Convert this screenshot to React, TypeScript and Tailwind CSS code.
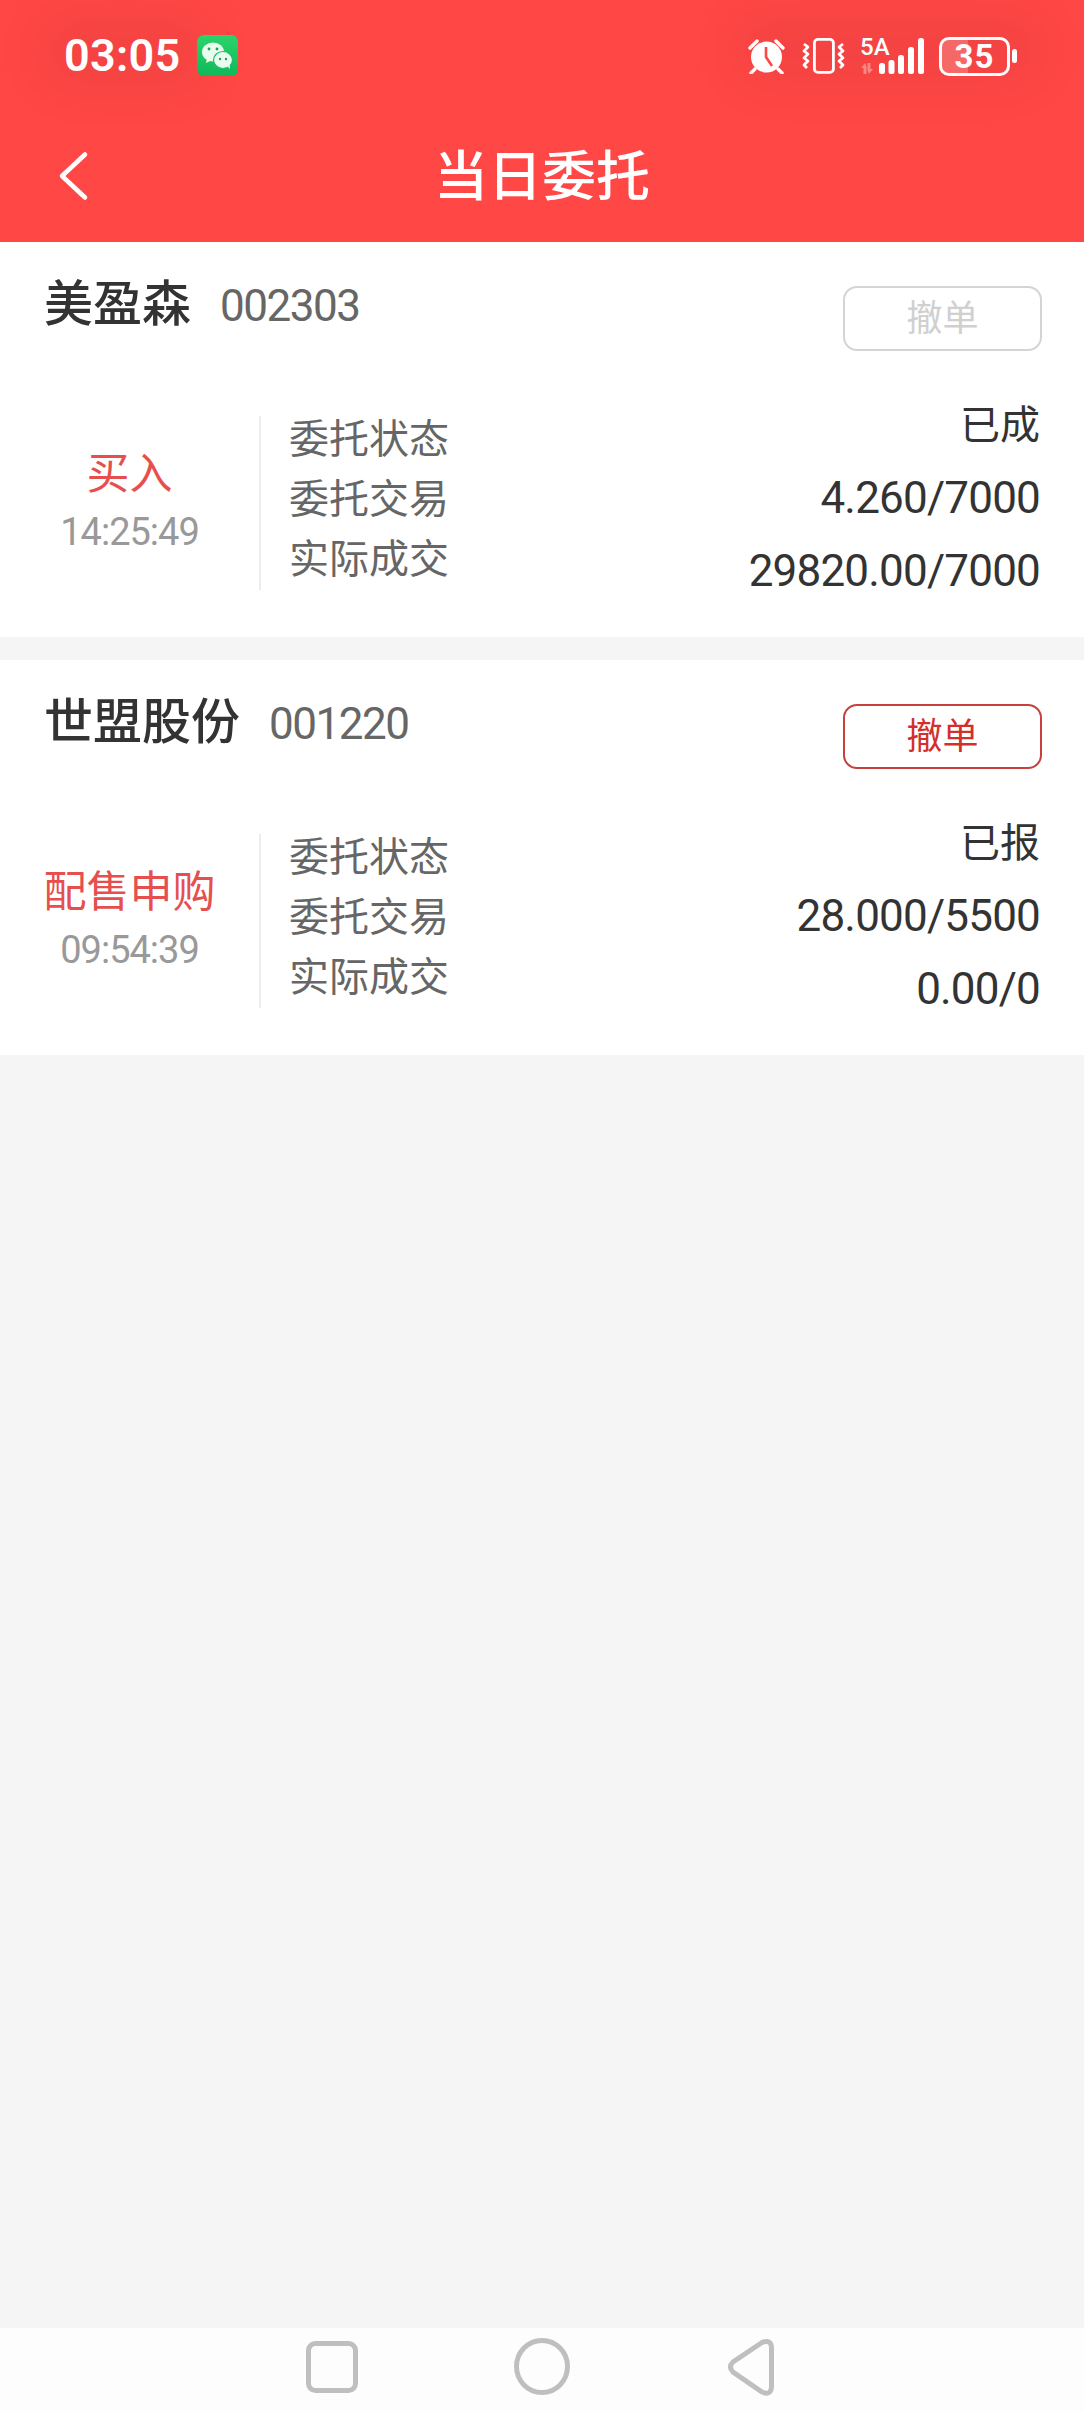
interface Order {
  name: string
  code: string
  side: string
  time: string
  status: string
  entrust: string
  deal: string
  canCancel: boolean
}

const orders: Order[] = [
  { name: '美盈森', code: '002303', side: '买入', time: '14:25:49', status: '已成', entrust: '4.260/7000', deal: '29820.00/7000', canCancel: false },
  { name: '世盟股份', code: '001220', side: '配售申购', time: '09:54:39', status: '已报', entrust: '28.000/5500', deal: '0.00/0', canCancel: true },
]

function WeChatIcon() {
  return (
    <svg width="41" height="41" viewBox="0 0 41 41" className="ml-[16px]">
      <defs>
        <linearGradient id="wx" x1="0" y1="0" x2="0" y2="1">
          <stop offset="0" stopColor="#2bd46a" />
          <stop offset="1" stopColor="#0fb95a" />
        </linearGradient>
      </defs>
      <rect width="41" height="41" rx="7" fill="url(#wx)" />
      <ellipse cx="16" cy="17" rx="11" ry="9.5" fill="#eafbef" />
      <path d="M10 23l-1 5 6-3z" fill="#eafbef" />
      <ellipse cx="26" cy="25" rx="9.5" ry="8.5" fill="#eafbef" stroke="#17c060" strokeWidth="1.2" />
      <path d="M30 31l3 3-.5-5z" fill="#eafbef" />
      <circle cx="12" cy="14" r="1.4" fill="#17a550" />
      <circle cx="20" cy="14" r="1.4" fill="#17a550" />
      <circle cx="23" cy="24" r="1.2" fill="#17a550" />
      <circle cx="29" cy="24" r="1.2" fill="#17a550" />
    </svg>
  )
}

function AlarmIcon() {
  return (
    <svg width="37" height="36" viewBox="0 0 37 36">
      <circle cx="18.500" cy="19" r="15.500" fill="#fff" />
      <path d="M18 9v10l6 9" fill="none" stroke="#ff4745" strokeWidth="2.600" />
      <path d="M2 10l7-7M35 10l-7-7M7 31l-4 4M30 31l4 4" stroke="#fff" strokeWidth="3.400" strokeLinecap="round" />
    </svg>
  )
}

function VibrateIcon() {
  return (
    <svg width="43" height="36" viewBox="0 0 43 36" fill="none" stroke="#fff" strokeWidth="2.800">
      <rect x="12.400" y="1.400" width="19" height="33" rx="3.500" />
      <path d="M2 6l4 3-4 4 4 3-4 4 4 3-4 4 3 3" strokeLinejoin="round" />
      <path d="M41 6l-4 3 4 4-4 3 4 4-4 3 4 4-3 3" strokeLinejoin="round" />
    </svg>
  )
}

function SignalIcon() {
  return (
    <svg width="65" height="36" viewBox="0 0 65 36" fill="#fff">
      <path d="M5 25l-4 5h2.500v6h3v-6h0.500zM9 36l4-5h-2.500v-6h-3v6h-.500z" opacity=".35" />
      <rect x="19" y="25" width="6" height="11" rx="2.500" />
      <rect x="28.500" y="22" width="6" height="14" rx="2.500" />
      <rect x="38" y="17" width="6" height="19" rx="2.500" />
      <rect x="48" y="9" width="6" height="27" rx="2.500" />
      <rect x="58" y="0" width="6" height="36" rx="2.500" />
    </svg>
  )
}

function StatusBar() {
  return (
    <div className="relative h-[110px] flex justify-between pt-[35px] pl-[64px] pr-[67px]">
      {/* soft shade the system puts behind the status icons */}
      <div className="absolute left-[40px] top-[16px] w-[170px] h-[70px] rounded-full bg-black/5 blur-xl" />
      <div className="absolute right-[40px] top-[16px] w-[310px] h-[66px] rounded-full bg-black/5 blur-xl" />
      <div className="relative flex items-start">
        <span className="text-[45px] leading-[41px] font-semibold tracking-[0.3px] text-white">03:05</span>
        <WeChatIcon />
      </div>
      <div className="relative flex items-start pt-[3px]">
        <AlarmIcon />
        <div className="ml-[17px]"><VibrateIcon /></div>
        <div className="relative ml-[15px]">
          <SignalIcon />
          <span className="absolute left-0 top-[-5px] text-[24px] leading-[28px] font-medium text-white">5A</span>
        </div>
        <div className="ml-[14px] -mt-[1px] w-[71px] h-[39px] rounded-[10px] border-[3px] border-white overflow-hidden relative flex items-center justify-center">
          <div className="absolute left-0 top-0 bottom-0 w-[26px] bg-white/20" />
          <span className="relative text-[33px] leading-none font-bold text-white tracking-[1px]">35</span>
        </div>
        <div className="ml-[2px] mt-[11px] w-[5px] h-[14px] rounded-full bg-white" />
      </div>
    </div>
  )
}

function OrderCard({ order }: { order: Order }) {
  return (
    <div className="bg-white h-[395px]">
      <div className="h-[174px] flex justify-between items-start pl-[44px] pr-[42px]">
        <div className="flex items-center pt-[33px]">
          <span className="text-[49px] leading-[58px] font-medium text-[#333]">{order.name}</span>
          <span className="ml-[29px] mt-[2px] text-[44px] leading-[58px] tracking-[-1.500px] text-[#666]">{order.code}</span>
        </div>
        {order.canCancel ? (
          <div className="mt-[44px] w-[199px] h-[65px] rounded-[14px] border-2 border-[#c8403c] flex items-center justify-center text-[36px] text-[#d2302c]">撤单</div>
        ) : (
          <div className="mt-[44px] w-[199px] h-[65px] rounded-[14px] border-2 border-[#d4d4d4] flex items-center justify-center text-[36px] text-[#d0d0d0]">撤单</div>
        )}
      </div>
      <div className="h-[174px] flex">
        <div className="w-[261px] border-r-2 border-[#ececec] flex flex-col items-center justify-center pb-[3px]">
          <div className="text-[43px] leading-[50px] text-[#e5504e]">{order.side}</div>
          <div className="mt-[10px] text-[38px] leading-[46px] tracking-[-1px] text-[#999]">{order.time}</div>
        </div>
        <div className="pl-[28px] -mt-[6px]">
          <div className="text-[40px] leading-[60px] text-[#666]">委托状态</div>
          <div className="text-[40px] leading-[60px] text-[#666]">委托交易</div>
          <div className="text-[40px] leading-[60px] text-[#666]">实际成交</div>
        </div>
        <div className="flex-1 text-right pr-[44px] -mt-[27px] text-[#333]">
          <div className="text-[40px] leading-[73px]">{order.status}</div>
          <div className="text-[44px] leading-[73px] tracking-[-0.800px]">{order.entrust}</div>
          <div className="text-[44px] leading-[73px] tracking-[-0.800px]">{order.deal}</div>
        </div>
      </div>
    </div>
  )
}

export default function App() {
  return (
    <div className="w-[1084px] h-[2412px] flex flex-col bg-[#f5f5f5] font-['Roboto','Noto_Sans_CJK_SC',sans-serif]">
      <div className="bg-[#ff4745]">
        <StatusBar />
        <div className="h-[132px] grid grid-cols-[1fr_auto_1fr] items-center">
          <div className="pl-[58px]">
            <svg width="32" height="50" viewBox="0 0 32 50" fill="none" stroke="#fff" strokeWidth="4.500" strokeLinecap="round" strokeLinejoin="round">
              <path d="M27 3.500L4 25l23 21.500" />
            </svg>
          </div>
          <div className="pt-[3px] text-[54px] leading-[64px] font-medium text-white">当日委托</div>
          <div />
        </div>
      </div>
      <div className="flex-1 flex flex-col gap-[23px]">
        {orders.map(o => <OrderCard key={o.code} order={o} />)}
      </div>
      <div className="h-[84px] bg-[#fdfdfd]">
        <svg width="1084" height="84" viewBox="0 0 1084 84" fill="none" stroke="#bfbfbf" strokeWidth="5">
          <rect x="308.500" y="15.500" width="47" height="47" rx="7" />
          <ellipse cx="542" cy="38.500" rx="25.500" ry="26" />
          <path d="M762 14.500L733 34q-5 5 0 10L762 64q9.500 4 9.500-6V20q0-9-9.500-5.500z" />
        </svg>
      </div>
    </div>
  )
}
